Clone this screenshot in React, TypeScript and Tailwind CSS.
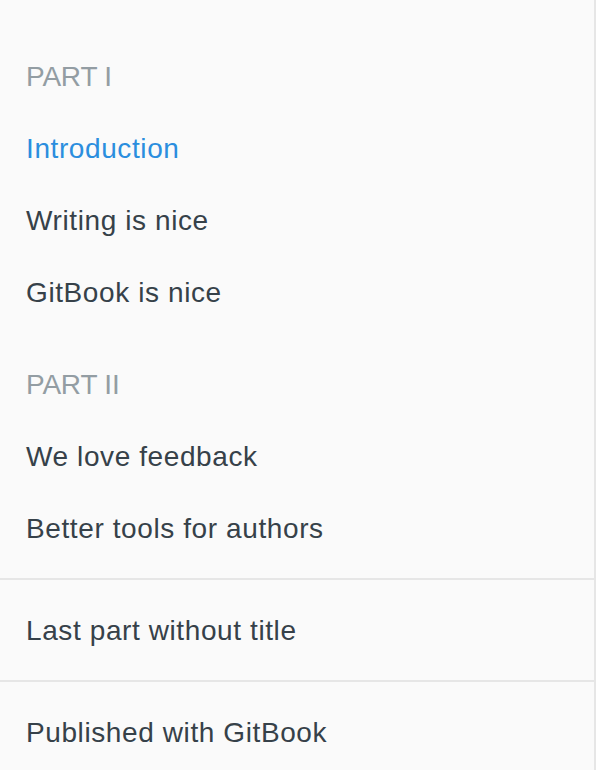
import React from 'react';

interface Chapter {
  title: string;
  active?: boolean;
}

interface Part {
  header?: string;
  chapters: Chapter[];
}

const parts: Part[] = [
  {
    header: 'PART I',
    chapters: [{ title: 'Introduction', active: true }, { title: 'Writing is nice' }, { title: 'GitBook is nice' }],
  },
  {
    header: 'PART II',
    chapters: [{ title: 'We love feedback' }, { title: 'Better tools for authors' }],
  },
];

const Row: React.FC<{ children: React.ReactNode; className?: string }> = ({ children, className = '' }) => (
  <li className={`h-[72px] leading-[74px] px-[26px] whitespace-nowrap ${className}`}>{children}</li>
);

export default function App() {
  return (
    <div
      className="w-[596px] h-[770px] bg-[#fafafa] border-r-2 border-[#e6e6e6] overflow-hidden text-[28px] text-[#364149]"
      style={{ fontFamily: '"Liberation Sans", Arial, Helvetica, sans-serif' }}
    >
      <ul className="pt-[40px] pb-[14px]">
        {parts.map((part, i) => (
          <React.Fragment key={part.header}>
            {i > 0 && <li className="h-[20px]" />}
            {part.header && <Row className="text-[#939da3] tracking-[-0.2px]">{part.header}</Row>}
            {part.chapters.map(ch => (
              <Row key={ch.title} className={`tracking-[0.6px] ${ch.active ? 'text-[#2b8ede]' : ''}`}>
                {ch.title}
              </Row>
            ))}
          </React.Fragment>
        ))}
      </ul>
      <ul className="border-t-2 border-[#e6e6e6] py-[14px]">
        <Row className="tracking-[0.6px]">Last part without title</Row>
      </ul>
      <ul className="border-t-2 border-[#e6e6e6] pt-[14px]">
        <Row className="tracking-[0.6px]">Published with GitBook</Row>
      </ul>
    </div>
  );
}
